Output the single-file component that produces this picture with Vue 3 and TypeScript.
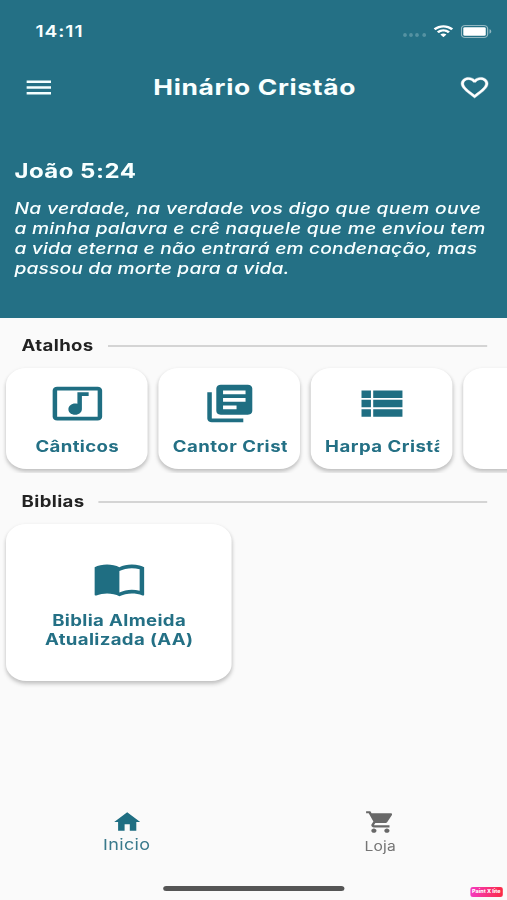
<script setup lang="ts">
interface Shortcut {
  label: string
  path: string
  kind: string
}

const shortcuts: Shortcut[] = [
  {
    label: 'Cânticos',
    kind: 'video',
    path: 'M21 3H3c-1.1 0-2 .9-2 2v14c0 1.1.9 2 2 2h18c1.1 0 2-.9 2-2V5c0-1.1-.9-2-2-2zm0 16H3V5h18v14zM8 15c0-1.66 1.34-3 3-3 .35 0 .69.07 1 .18V6h5v2h-3v7.03c-.02 1.64-1.35 2.97-3 2.97-1.66 0-3-1.34-3-3z',
  },
  {
    label: 'Cantor Cristão',
    kind: 'books',
    path: 'M4 6H2v14c0 1.1.9 2 2 2h14v-2H4V6zm16-4H8c-1.1 0-2 .9-2 2v12c0 1.1.9 2 2 2h12c1.1 0 2-.9 2-2V4c0-1.1-.9-2-2-2zm-1 9H9V9h10v2zm-4 4H9v-2h6v2zm4-8H9V5h10v2z',
  },
  {
    label: 'Harpa Cristã',
    kind: 'list',
    path: 'M2.8 14H7v-4H2.800v4zm0 5H7v-4H2.800v4zm0-10H7V5H2.800v4zM8 14h13v-4H8v4zm0 5h13v-4H8v4zM8 5v4h13V5H8z',
  },
  { label: '', kind: 'empty', path: '' },
]

const verseLines: string[] = [
  'Na verdade, na verdade vos digo que quem ouve',
  'a minha palavra e crê naquele que me enviou tem',
  'a vida eterna e não entrará em condenação, mas',
  'passou da morte para a vida.',
]
</script>

<template>
  <div class="viewport">
    <div class="screen">
      <header class="hero">
        <div class="status">
          <span class="time">14:11</span>
          <div class="indicators">
            <span class="dots"><i v-for="n in 4" :key="n"></i></span>
            <svg class="wifi" viewBox="0 0 17 12" preserveAspectRatio="none">
              <path fill="#fff" d="M8.5 2.4c2.4 0 4.6.9 6.3 2.5.1.1.3.1.4 0l1.2-1.2c.1-.1.1-.3 0-.5C12-.9 5-.9.6 3.200c-.1.2-.1.4 0 .5l1.200 1.200c.1.1.3.1.4 0 1.700-1.600 3.900-2.500 6.300-2.500zm0 3.900c1.300 0 2.600.5 3.500 1.400.1.1.3.1.5 0l1.200-1.200c.1-.1.1-.3 0-.5-2.900-2.700-7.500-2.700-10.400 0-.1.2-.1.4 0 .5l1.200 1.200c.2.1.4.1.5 0 .9-.9 2.200-1.400 3.500-1.400zm2.300 2.600c.1.1.1.300 0 .4l-2.100 2.100c-.1.1-.3.1-.4 0L6.200 9.300c-.1-.1-.1-.3 0-.4 1.300-1.100 3.300-1.100 4.600 0z" />
            </svg>
            <svg class="battery" viewBox="0 0 25 12" preserveAspectRatio="none">
              <rect x=".5" y=".5" width="21" height="11" rx="3" fill="none" stroke="#fff" stroke-opacity=".5" />
              <rect x="2" y="2" width="18" height="8" rx="1.300" fill="#fff" />
              <path d="M23 4v4c.9-.3 1.400-1.100 1.400-2S23.900 4.300 23 4z" fill="#fff" fill-opacity=".5" />
            </svg>
          </div>
        </div>

        <nav class="appbar">
          <svg class="menu" viewBox="0 0 21 15" preserveAspectRatio="none">
            <path fill="#f4ffff" d="M0 .4h21v2.500H0zM0 6.200h21v2.500H0zM0 12h21v2.500H0z" />
          </svg>
          <h1>Hinário Cristão</h1>
          <svg class="heart" viewBox="0 0 24 24">
            <path fill="#fff" stroke="#fff" stroke-width=".3" d="M16.5 3c-1.740 0-3.410.81-4.500 2.090C10.910 3.810 9.240 3 7.500 3 4.420 3 2 5.420 2 8.500c0 3.780 3.400 6.860 8.550 11.540L12 21.350l1.450-1.320C18.600 15.360 22 12.280 22 8.500 22 5.420 19.580 3 16.500 3zm-4.400 15.550l-.1.100-.1-.100C7.140 14.240 4 11.390 4 8.500 4 6.500 5.500 5 7.500 5c1.540 0 3.040.99 3.570 2.360h1.870C13.460 5.990 14.960 5 16.500 5c2 0 3.500 1.500 3.500 3.500 0 2.890-3.140 5.740-7.900 10.050z" />
          </svg>
        </nav>

        <section class="verse">
          <h2>João 5:24</h2>
          <p><span v-for="line in verseLines" :key="line">{{ line }}</span></p>
        </section>
      </header>

      <main>
        <div class="heading first"><h3>Atalhos</h3><span class="rule"></span></div>
        <div class="shortcuts">
          <article v-for="item in shortcuts" :key="item.kind" class="card shortcut">
            <svg v-if="item.path" viewBox="0 0 24 24"><path :d="item.path" /></svg>
            <span v-if="item.label" class="label" :class="item.kind">{{ item.label }}</span>
          </article>
        </div>

        <div class="heading second"><h3>Biblias</h3><span class="rule"></span></div>
        <article class="card bible">
          <svg viewBox="0 0 24 24">
            <path d="M21 5c-1.110-.35-2.330-.5-3.500-.5-1.950 0-4.050.4-5.500 1.500-1.450-1.100-3.550-1.500-5.500-1.500S2.450 4.900 1 6v14.650c0 .25.25.5.5.5.1 0 .150-.050.250-.050C3.100 20.450 5.050 20 6.500 20c1.950 0 4.050.4 5.500 1.500 1.350-.85 3.800-1.500 5.500-1.500 1.650 0 3.350.3 4.750 1.050.1.050.150.050.250.050.25 0 .5-.25.5-.5V6c-.6-.45-1.250-.75-2-1zm0 13.500c-1.100-.35-2.300-.5-3.500-.5-1.700 0-4.150.65-5.500 1.500V8c1.350-.85 3.800-1.500 5.500-1.500 1.200 0 2.400.15 3.500.5v11.500z" />
          </svg>
          <span class="label">Biblia Almeida<br />Atualizada (AA)</span>
        </article>
      </main>

      <footer>
        <div class="tabs">
          <div class="tab active">
            <svg viewBox="0 0 24 24"><path d="M10 20v-6h4v6h5v-8h3L12 3 2 12h3v8z" /></svg>
            <span>Inicio</span>
          </div>
          <div class="tab">
            <svg viewBox="0 0 24 24"><path d="M7 18c-1.100 0-1.990.9-1.990 2S5.900 22 7 22s2-.9 2-2-.9-2-2-2zM1 2v2h2l3.600 7.590-1.350 2.450c-.16.28-.25.61-.25.96 0 1.100.9 2 2 2h12v-2H7.420c-.14 0-.25-.11-.25-.25l.03-.12.9-1.630h7.450c.75 0 1.410-.41 1.750-1.030l3.580-6.490c.08-.14.12-.31.12-.48 0-.55-.45-1-1-1H5.210l-.94-2H1zm16 16c-1.100 0-1.990.9-1.990 2s.89 2 1.990 2 2-.9 2-2-.9-2-2-2z" /></svg>
            <span>Loja</span>
          </div>
        </div>
        <div class="home-row"><span class="home-bar"></span></div>
        <span class="badge">Paint X lite</span>
      </footer>
    </div>
  </div>
</template>

<style>
body {
  margin: 0;
  background: #fafafa;
}
</style>

<style scoped>
.viewport {
  width: 507px;
  height: 900px;
  overflow: hidden;
  background: #fafafa;
}
/* The phone layout is widened by a fifth to fill the window. */
.screen {
  width: 422.5px;
  height: 900px;
  display: flex;
  flex-direction: column;
  transform: scaleX(1.2);
  transform-origin: 0 0;
  font-family: Inter, 'Liberation Sans', sans-serif;
  color: #222;
}
h1, h2, h3, p {
  margin: 0;
}
.hero {
  box-sizing: border-box;
  height: 318px;
  background: #247085;
  color: #f8ffff;
}
.status {
  height: 62px;
  box-sizing: border-box;
  padding: 0 13px 0 29.500px;
  display: flex;
  align-items: center;
  justify-content: space-between;
}
.time {
  font-size: 16px;
  font-weight: 600;
  letter-spacing: 0.8px;
}
.indicators {
  display: flex;
  align-items: center;
}
.dots {
  display: flex;
  gap: 2.300px;
  margin: 8px 6px 0 0;
}
.dots i {
  width: 3px;
  height: 3.500px;
  border-radius: 50%;
  background: #5592a2;
}
.wifi {
  width: 17px;
  height: 12.500px;
  margin-right: 6px;
}
.battery {
  width: 26px;
  height: 13px;
}
.appbar {
  height: 50px;
  box-sizing: border-box;
  padding: 0 13.500px 0 22px;
  display: flex;
  align-items: center;
  justify-content: space-between;
}
.menu {
  width: 20.500px;
  height: 15px;
}
h1 {
  font-size: 22px;
  font-weight: 700;
  letter-spacing: 0.55px;
  line-height: 26px;
}
.heart {
  width: 27px;
  height: 27px;
}
.verse {
  padding: 47px 0 0 12px;
}
h2 {
  font-size: 20px;
  font-weight: 700;
  letter-spacing: 0.4px;
  line-height: 24px;
}
.verse p {
  margin-top: 15px;
  font-size: 16px;
  font-style: italic;
  font-weight: 500;
  line-height: 20px;
}
.verse p span {
  display: block;
  white-space: nowrap;
  letter-spacing: 0.28px;
}
.verse p span:nth-child(2) {
  letter-spacing: 0.23px;
}
.verse p span:nth-child(3) {
  letter-spacing: 0.15px;
}
.verse p span:nth-child(4) {
  letter-spacing: 0.12px;
}
.heading {
  display: flex;
  align-items: center;
  padding: 0 16.500px 0 18px;
  gap: 12px;
}
.heading.first {
  margin-top: 17px;
  height: 21px;
}
.heading.second {
  margin-top: 29px;
  height: 22px;
}
h3 {
  font-size: 15.500px;
  font-weight: 700;
  letter-spacing: 0.3px;
  line-height: 20px;
}
.rule {
  flex: 1;
  height: 2px;
  background: #d4d4d4;
}
.card {
  box-sizing: border-box;
  background: #fff;
  border-radius: 17px;
  box-shadow: 0 3px 4px rgba(0, 0, 0, 0.2), 0 1px 4px rgba(0, 0, 0, 0.07);
  display: flex;
  flex-direction: column;
  align-items: center;
  color: #247085;
}
.card svg {
  width: 45px;
  height: 45px;
  fill: #1f6e82;
}
.shortcuts {
  height: 106px;
  box-sizing: border-box;
  padding: 12px 0 0 5.400px;
  margin-bottom: 0;
  display: flex;
  gap: 9px;
  overflow: hidden;
}
.shortcuts {
  height: 117px;
  margin-bottom: -11px;
  clip-path: inset(0 0 0 0);
}
.shortcut {
  flex: none;
  width: 118px;
  height: 101px;
  padding: 13px 11.500px 0;
}
.label {
  font-size: 15.500px;
  font-weight: 700;
  letter-spacing: 0.3px;
  line-height: 19px;
  text-align: center;
  white-space: nowrap;
}
.shortcut .label {
  width: 95px;
  margin-top: 10.500px;
  overflow: hidden;
}
.shortcut .books,
.shortcut .list {
  text-align: left;
  letter-spacing: 0.4px;
}
.bible {
  width: 188.200px;
  height: 157px;
  margin: 11px 0 0 5.200px;
  padding-top: 31.500px;
}
.bible .label {
  margin-top: 10px;
}
footer {
  margin-top: auto;
  position: relative;
}
.tabs {
  display: flex;
}
.tab {
  flex: 1;
  display: flex;
  flex-direction: column;
  align-items: center;
  color: #757575;
  fill: #686868;
  font-size: 13px;
  letter-spacing: 0.2px;
  line-height: 20px;
}
.tab svg {
  width: 26px;
  height: 26px;
  margin-top: -1px;
  margin-bottom: 1px;
}
.tab.active {
  color: #39798b;
  fill: #1f6e82;
  font-size: 15px;
  letter-spacing: 0.3px;
}
.tab.active span {
  margin-top: -1px;
}
.home-row {
  display: flex;
  justify-content: center;
  padding: 30px 0 9px;
}
.home-bar {
  width: 151px;
  height: 5px;
  border-radius: 3px;
  background: #555;
}
.badge {
  position: absolute;
  right: 3.500px;
  bottom: 3px;
  width: 27.500px;
  height: 10.500px;
  border-radius: 2px;
  background: linear-gradient(90deg, #f43bc0, #fb2944);
  color: #fff;
  font-size: 4.500px;
  font-weight: 800;
  line-height: 10px;
  text-align: center;
  white-space: nowrap;
}
</style>
